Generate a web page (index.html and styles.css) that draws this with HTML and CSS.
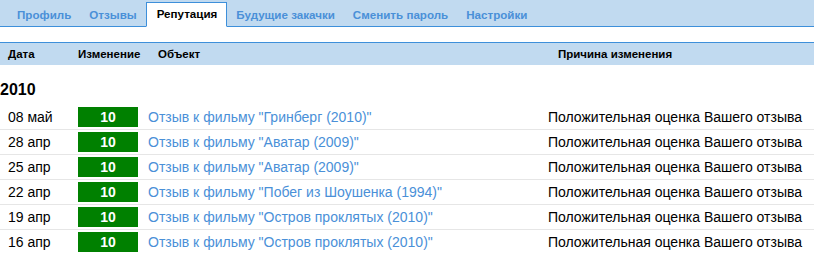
FILE: index.html
```html
<!DOCTYPE html>
<html lang="ru">
<head>
<meta charset="utf-8">
<link rel="stylesheet" href="styles.css">
</head>
<body>
<nav class="tabs">
  <a class="tab">Профиль</a>
  <a class="tab">Отзывы</a>
  <a class="tab active">Репутация</a>
  <a class="tab">Будущие закачки</a>
  <a class="tab">Сменить пароль</a>
  <a class="tab">Настройки</a>
</nav>
<div class="head">
  <span class="c-date">Дата</span>
  <span class="c-change">Изменение</span>
  <span class="c-obj h-obj">Объект</span>
  <span class="c-reason h-reason">Причина изменения</span>
</div>
<div class="year">2010</div>
<div class="rows">
  <div class="row"><span class="c-date">08 май</span><span class="c-change"><b class="score">10</b></span><a class="c-obj link">Отзыв к фильму "Гринберг (2010)"</a><span class="c-reason">Положительная оценка Вашего отзыва</span></div>
  <div class="row"><span class="c-date">28 апр</span><span class="c-change"><b class="score">10</b></span><a class="c-obj link">Отзыв к фильму "Аватар (2009)"</a><span class="c-reason">Положительная оценка Вашего отзыва</span></div>
  <div class="row"><span class="c-date">25 апр</span><span class="c-change"><b class="score">10</b></span><a class="c-obj link">Отзыв к фильму "Аватар (2009)"</a><span class="c-reason">Положительная оценка Вашего отзыва</span></div>
  <div class="row"><span class="c-date">22 апр</span><span class="c-change"><b class="score">10</b></span><a class="c-obj link">Отзыв к фильму "Побег из Шоушенка (1994)"</a><span class="c-reason">Положительная оценка Вашего отзыва</span></div>
  <div class="row"><span class="c-date">19 апр</span><span class="c-change"><b class="score">10</b></span><a class="c-obj link">Отзыв к фильму "Остров проклятых (2010)"</a><span class="c-reason">Положительная оценка Вашего отзыва</span></div>
  <div class="row"><span class="c-date">16 апр</span><span class="c-change"><b class="score">10</b></span><a class="c-obj link">Отзыв к фильму "Остров проклятых (2010)"</a><span class="c-reason">Положительная оценка Вашего отзыва</span></div>
</div>
</body>
</html>
```
FILE: styles.css
```css
html, body {
  margin: 0;
  padding: 0;
  background: #fff;
  font-family: "Liberation Sans", Arial, sans-serif;
  color: #000;
}

.tabs {
  display: flex;
  align-items: flex-end;
  height: 26px;
  padding-left: 8px;
  background: #c1daf0;
  border-bottom: 1px solid #3d8fda;
}

.tab {
  display: block;
  padding: 0 9px;
  height: 23px;
  line-height: 23px;
  font-size: 11.6px;
  font-weight: bold;
  color: #4a90d8;
  white-space: nowrap;
}

.tab.active {
  height: 23px;
  line-height: 22px;
  padding: 0 9px 0 10px;
  margin-bottom: -1px;
  background: #fff;
  color: #000;
  border: 1px solid #3d8fda;
  border-bottom: 1px solid #fff;
}

.head {
  display: grid;
  grid-template-columns: 70px 70px 400px 1fr;
  align-items: center;
  margin-top: 15px;
  height: 22px;
  padding-left: 8px;
  background: #c1daf0;
  border-top: 1px solid #3d8fda;
  font-size: 11.5px;
  font-weight: bold;
}

.h-obj { padding-left: 10px; }
.h-reason { padding-left: 10px; }

.year {
  height: 40px;
  padding: 16px 0 0 0;
  box-sizing: border-box;
  font-size: 16px;
  font-weight: bold;
}

.rows {
  display: flex;
  flex-direction: column;
}

.row {
  display: grid;
  grid-template-columns: 70px 70px 400px 1fr;
  align-items: center;
  height: 24px;
  padding-left: 8px;
  border-bottom: 1px solid #e6e6e6;
  font-size: 14px;
  white-space: nowrap;
}

.row:last-child { border-bottom: none; }

.score {
  display: block;
  width: 60px;
  height: 20px;
  line-height: 20px;
  text-align: center;
  background: #008000;
  color: #fff;
  font-size: 14px;
  font-weight: bold;
}

.link {
  color: #4a90d8;
}
```
